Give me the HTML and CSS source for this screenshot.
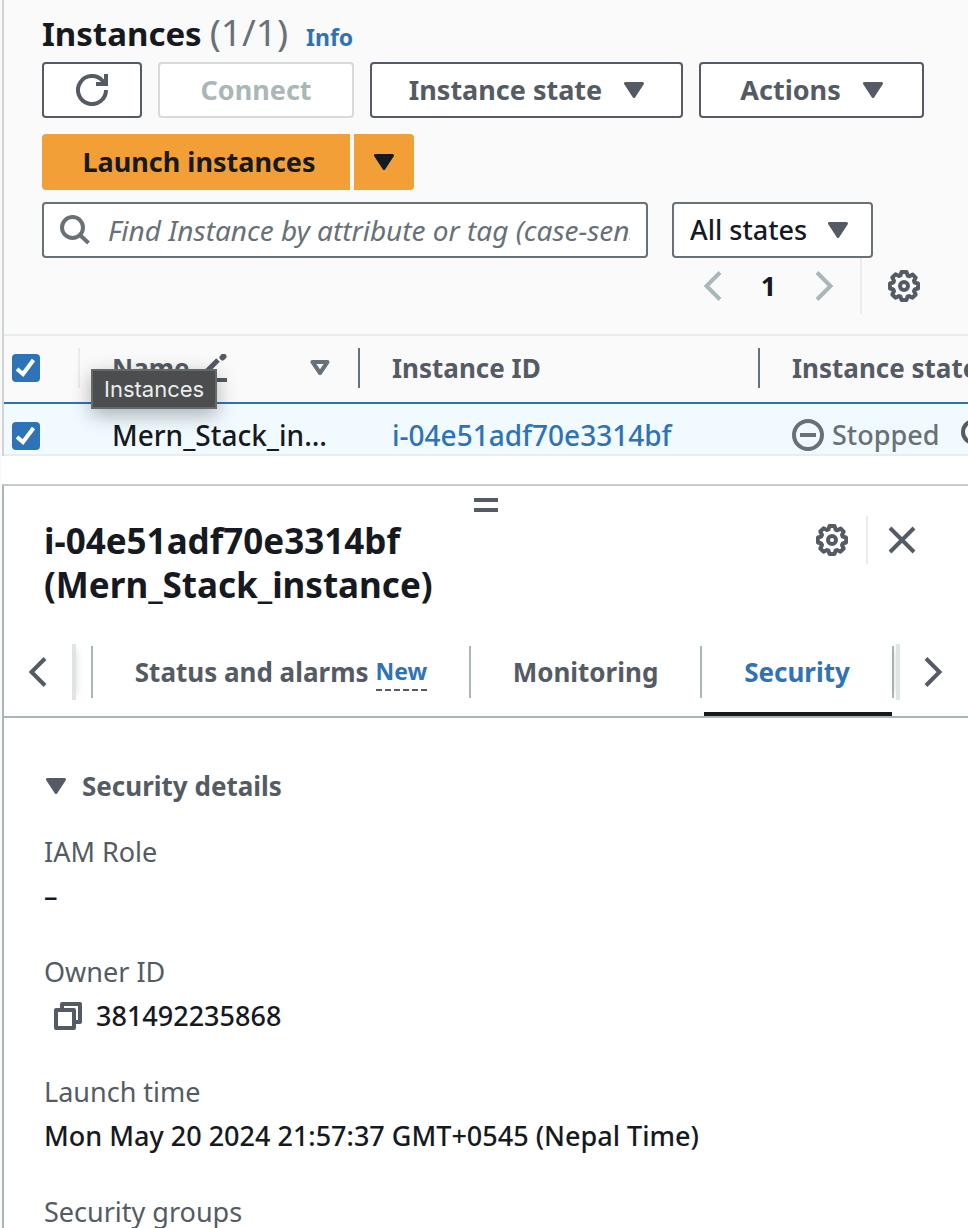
FILE: index.html
```html
<!DOCTYPE html>
<html lang="en">
<head>
<meta charset="utf-8">
<title>Instances</title>
<meta name="viewport" content="width=device-width, initial-scale=1">
<link rel="stylesheet" href="styles.css">
</head>
<body>
<svg class="sprite" aria-hidden="true">
  <symbol id="caret" viewBox="0 0 20 16"><path d="M1.500 1.500h17L10 14.500z" fill="currentColor" stroke="currentColor" stroke-width="3" stroke-linejoin="round"/></symbol>
  <symbol id="gear" viewBox="0 0 32 32">
    <path fill="none" stroke="currentColor" stroke-width="4" stroke-linejoin="round" d="M13.500 2h5l1.200 3.600 1.600.7 3.400-1.700 3 3-1.700 3.400.7 1.600L30 13.500v5l-3.300 1-.7 1.600 1.700 3.400-3.200 3.200-3.400-1.700-1.600.7L18.500 30h-5l-1-3.300-1.600-.7-3.400 1.700-3.200-3.200L6 21.100l-.7-1.600L2 18.500v-5l3.300-1 .7-1.600-1.700-3.400 3.200-3.200L10.900 6l1.600-.7z"/>
    <circle cx="16" cy="16" r="4" fill="none" stroke="currentColor" stroke-width="4"/>
  </symbol>
  <symbol id="left" viewBox="0 0 20 32"><path d="M17 2.500 3.500 16 17 29.500" fill="none" stroke="currentColor" stroke-width="4"/></symbol>
  <symbol id="right" viewBox="0 0 20 32"><path d="M3 2.500 16.500 16 3 29.500" fill="none" stroke="currentColor" stroke-width="4"/></symbol>
  <symbol id="tick" viewBox="0 0 28 28"><path d="M5 15l6 5L21.500 6" fill="none" stroke="#fff" stroke-width="4"/></symbol>
</svg>

<div class="app">
  <section class="list">
    <header class="toolbar">
      <div class="title"><h1>Instances</h1><span class="count">(1/1)</span><a class="info" href="#info">Info</a></div>
      <div class="actions">
        <button class="btn btn-refresh" type="button" aria-label="Refresh">
          <svg width="32" height="32" viewBox="0 0 32 32"><g fill="none" stroke="currentColor" stroke-width="4"><path d="M30 16a14 14 0 1 1-3.500-9.200l2 2.700"/><path d="M30 0v10H20"/></g></svg>
        </button>
        <button class="btn btn-connect" type="button" disabled>Connect</button>
        <button class="btn btn-state" type="button">Instance state <svg class="caret"><use href="#caret"/></svg></button>
        <button class="btn btn-actions" type="button">Actions <svg class="caret"><use href="#caret"/></svg></button>
        <div class="split">
          <button class="primary primary-main" type="button">Launch instances</button>
          <button class="primary primary-more" type="button" aria-label="More launch options"><svg class="caret"><use href="#caret"/></svg></button>
        </div>
      </div>
      <div class="filters">
        <label class="search">
          <svg width="30" height="30" viewBox="0 0 30 30"><g fill="none" stroke="currentColor" stroke-width="4"><circle cx="12.500" cy="12.500" r="10.500"/><path d="M20 20l8.500 8"/></g></svg>
          <input type="text" aria-label="Find Instance" placeholder="Find Instance by attribute or tag (case-sensitive)">
        </label>
        <div class="select">
          <select aria-label="State"><option>All states</option></select>
          <svg class="caret"><use href="#caret"/></svg>
        </div>
      </div>
      <div class="pager">
        <button class="icon-btn muted" type="button" aria-label="Previous page" disabled><svg class="chev"><use href="#left"/></svg></button>
        <span class="page">1</span>
        <button class="icon-btn muted" type="button" aria-label="Next page" disabled><svg class="chev"><use href="#right"/></svg></button>
        <span class="pager-rule"></span>
        <button class="icon-btn" type="button" aria-label="Preferences"><svg class="gear"><use href="#gear"/></svg></button>
      </div>
    </header>

    <div class="table-wrap">
      <table class="table">
        <colgroup><col class="c-check"><col class="c-name"><col class="c-id"><col class="c-state"></colgroup>
        <thead>
          <tr>
            <th><div class="head head-check"><label class="check"><input type="checkbox" aria-label="Select all" checked><svg><use href="#tick"/></svg></label></div></th>
            <th class="name-cell">
              <div class="head"><span>Name</span>
                <svg class="pencil" width="28" height="28" viewBox="0 0 28 28"><path d="M3 21 18 6" stroke="currentColor" stroke-width="5"/><path d="M22.500 3.500l1-1" stroke="currentColor" stroke-width="6" stroke-linecap="round"/><path d="M0 26h27" stroke="currentColor" stroke-width="4"/></svg>
                <svg class="sort" width="20" height="16" viewBox="0 0 20 16"><path d="M2.500 2h15L10 13z" fill="none" stroke="currentColor" stroke-width="4" stroke-linejoin="round"/></svg>
              </div>
              <span class="tooltip" role="tooltip">Instances</span>
            </th>
            <th><div class="head">Instance ID</div></th>
            <th><div class="head head-last">Instance state</div></th>
          </tr>
        </thead>
        <tbody>
          <tr>
            <td class="td-check"><label class="check"><input type="checkbox" aria-label="Select Mern_Stack_instance" checked><svg><use href="#tick"/></svg></label></td>
            <td>Mern_Stack_in…</td>
            <td><a href="#instance">i-04e51adf70e3314bf</a></td>
            <td><div class="status">
              <svg width="32" height="32" viewBox="0 0 32 32"><g fill="none" stroke="currentColor" stroke-width="4"><circle cx="16" cy="16" r="14"/><path d="M8 16h16"/></g></svg>
              <span>Stopped</span>
              <svg class="zoom" width="32" height="32" viewBox="0 0 32 32"><g fill="none" stroke="currentColor" stroke-width="4"><circle cx="13" cy="13" r="11"/><path d="M21 21l9 9"/></g></svg>
            </div></td>
          </tr>
        </tbody>
      </table>
    </div>
  </section>

  <section class="panel">
    <div class="grip"><span class="bars"></span></div>
    <header class="panel-head">
      <h2>i-04e51adf70e3314bf (Mern_Stack_instance)</h2>
      <div class="panel-tools">
        <button class="icon-btn" type="button" aria-label="Panel preferences"><svg class="gear"><use href="#gear"/></svg></button>
        <button class="icon-btn close" type="button" aria-label="Close"><svg width="28" height="28" viewBox="0 0 28 28"><path d="M2 2l24 24M26 2 2 26" fill="none" stroke="currentColor" stroke-width="4"/></svg></button>
      </div>
    </header>
    <nav class="tabbar">
      <button class="scroll scroll-left" type="button" aria-label="Scroll left"><svg class="chev"><use href="#left"/></svg></button>
      <div class="tabs" role="tablist">
        <button class="tab tab-status" type="button" role="tab"><span>Status and alarms <span class="new">New</span></span></button>
        <button class="tab tab-monitoring" type="button" role="tab"><span>Monitoring</span></button>
        <button class="tab tab-security" type="button" role="tab" aria-selected="true"><span>Security</span></button>
      </div>
      <button class="scroll scroll-right" type="button" aria-label="Scroll right"><svg class="chev"><use href="#right"/></svg></button>
    </nav>
    <div class="details">
      <h3><svg class="caret"><use href="#caret"/></svg>Security details</h3>
      <dl>
        <div><dt>IAM Role</dt><dd>–</dd></div>
        <div><dt>Owner ID</dt><dd class="owner">
          <button class="copy" type="button" aria-label="Copy owner ID"><svg width="28" height="28" viewBox="0 0 28 28"><g fill="none" stroke="currentColor" stroke-width="4" stroke-linejoin="round"><path d="M2 8h18v18H2z"/><path d="M8 8V2h18v18h-6"/></g></svg></button>381492235868</dd></div>
        <div><dt>Launch time</dt><dd>Mon May 20 2024 21:57:37 GMT+0545 (Nepal Time)</dd></div>
        <div><dt>Security groups</dt></div>
      </dl>
    </div>
  </section>
</div>
</body>
</html>
```
FILE: styles.css
```css
:root {
  --ink: #16191f;
  --grey: #545b64;
  --soft: #687078;
  --muted: #aab7b8;
  --rule: #eaeded;
  --blue: #2e73b8;
  --orange: #f29f38;
}

* { box-sizing: border-box; }

body {
  margin: 0;
  padding-left: 2px;
  background: #fafafa;
  color: var(--ink);
  font: 27px/44px "Noto Sans", "Open Sans", sans-serif;
}

button, input, select { font: inherit; color: inherit; }
button { padding: 0; border: 0; background: none; }
a { color: var(--blue); text-decoration: none; }
svg { display: block; flex: none; }
h1, h2, h3, dl, dd { margin: 0; }

.sprite { position: absolute; width: 0; height: 0; }
.caret { width: 20px; height: 16px; }
.gear { width: 32px; height: 32px; }
.chev { width: 20px; height: 32px; }

.app {
  display: flex;
  flex-direction: column;
  height: 100vh;
  overflow: hidden;
  background: #fff;
}

.list {
  border-left: 2px solid #cfd5d6;
  background: #fff;
}

.toolbar {
  padding: 6px 44px 20px 38px;
  border-bottom: 2px solid var(--rule);
  background: #fafafa;
}

.title { display: flex; align-items: baseline; height: 56px; }
.title h1 { font-size: 33px; line-height: 56px; }
.count { margin-left: 8px; color: var(--soft); font-size: 37px; }
.info { margin-left: 18px; font-size: 23px; font-weight: 700; }

.actions { display: flex; flex-wrap: wrap; gap: 16px; }

.btn {
  display: flex;
  align-items: center;
  justify-content: center;
  gap: 22px;
  height: 56px;
  border: 2px solid var(--grey);
  border-radius: 4px;
  background: #fff;
  color: var(--grey);
  font-weight: 700;
}

.btn:disabled { border-color: #d5dbdb; color: var(--muted); }
.btn-refresh { width: 100px; }
.btn-connect { width: 196px; }
.btn-state { width: 313px; }
.btn-actions { width: 225px; }

.split { display: flex; gap: 4px; }

.primary {
  display: flex;
  align-items: center;
  justify-content: center;
  height: 56px;
  background: var(--orange);
  font-weight: 700;
}

.primary-main { width: 308px; padding-left: 6px; border-radius: 4px 0 0 4px; }
.primary-more { width: 60px; border-radius: 0 4px 4px 0; }

.filters { display: flex; gap: 24px; padding: 12px 51px 0 0; font-weight: 500; }

.search {
  display: flex;
  flex: 1;
  align-items: center;
  gap: 18px;
  height: 56px;
  padding: 0 16px;
  border: 2px solid var(--soft);
  border-radius: 4px;
  background: #fff;
  color: var(--soft);
  font-size: 28px;
  font-weight: 400;
}

.search input {
  flex: 1;
  min-width: 0;
  padding: 0;
  border: 0;
  outline: 0;
  background: none;
}

.search input::placeholder { color: var(--soft); font-style: italic; opacity: 1; }

.select { display: grid; width: 201px; align-items: center; }
.select > * { grid-area: 1 / 1; }

.select select {
  width: 100%;
  height: 56px;
  padding: 0 16px;
  border: 2px solid var(--soft);
  border-radius: 4px;
  background: #fff;
  appearance: none;
}

.select .caret { justify-self: end; margin-right: 25px; color: var(--grey); pointer-events: none; }

.pager { display: flex; align-items: center; justify-content: flex-end; height: 56px; }
.pager .page { width: 91px; font-weight: 700; text-align: center; }
.pager-rule { width: 2px; height: 56px; margin: 0 22px 0 26px; background: var(--rule); }
.icon-btn { display: flex; align-items: center; padding: 0 4px; color: var(--grey); }
.muted { padding: 0; color: var(--muted); }

.table-wrap { overflow: hidden; }
.table { width: 1156px; table-layout: fixed; border-collapse: separate; border-spacing: 0; }
.c-check { width: 76px; }
.c-name { width: 280px; }
.c-id { width: 400px; }
.c-state { width: 400px; }

.table th {
  height: 68px;
  padding: 0 0 2px;
  border-bottom: 2px solid var(--blue);
  background: #fafafa;
  color: var(--grey);
  font-size: 26px;
  text-align: left;
}

.head {
  display: flex;
  align-items: center;
  height: 40px;
  padding: 0 28px 0 32px;
  border-right: 2px solid var(--soft);
}

.head-check { padding: 0 0 0 8px; border-color: var(--rule); }
.head-last { border: 0; }
.pencil { margin-left: 10px; }
.sort { margin-left: auto; color: var(--soft); }
.name-cell { position: relative; }

.tooltip {
  position: absolute;
  top: 33px;
  left: 11px;
  padding: 0 11px;
  border: 2px solid #66696a;
  background: #4b4d4f;
  box-shadow: 0 6px 20px rgba(0, 0, 0, .3);
  color: #ececec;
  font: 22px/36px Inter, sans-serif;
}

.table td {
  height: 52px;
  padding: 12px 0 0 32px;
  border-bottom: 2px solid var(--rule);
  background: #f1faff;
  font-size: 28px;
  font-weight: 500;
  line-height: 38px;
  vertical-align: top;
  white-space: nowrap;
}

.table .td-check { padding: 18px 0 0 8px; }

.check { display: grid; width: 28px; height: 28px; }
.check > * { grid-area: 1 / 1; width: 28px; height: 28px; margin: 0; }
.check input { appearance: none; border-radius: 4px; background: var(--blue); }
.check svg { pointer-events: none; }

.status { display: flex; align-items: center; gap: 8px; color: var(--soft); font-size: 27px; }
.status .zoom { margin-left: 14px; color: var(--grey); }

.panel {
  flex: 1;
  margin-top: 28px;
  border-top: 2px solid #c5cccd;
  border-left: 2px solid var(--muted);
  background: #fff;
}

.grip { display: flex; justify-content: center; height: 30px; padding-top: 12px; }
.bars { width: 24px; height: 14px; border: solid var(--grey); border-width: 4px 0; }

.panel-head { display: flex; justify-content: space-between; padding: 0 48px 0 40px; }
.panel-head h2 { width: 420px; padding-top: 3px; font-size: 35px; line-height: 44px; }
.panel-tools { display: flex; align-items: center; height: 48px; }
.panel-tools .close { height: 48px; margin-left: 14px; padding-left: 20px; border-left: 2px solid var(--rule); }

.tabbar {
  display: flex;
  align-items: center;
  height: 90px;
  margin-top: 21px;
  border-bottom: 2px solid var(--muted);
}

.scroll { display: flex; align-items: center; height: 56px; color: var(--grey); }
.scroll-left { width: 72px; padding-left: 24px; border-right: 4px solid #dfe4e4; box-shadow: 6px 0 8px -6px rgba(0, 0, 0, .15); }
.scroll-right { width: 72px; padding-left: 23px; border-left: 4px solid #dfe4e4; box-shadow: -6px 0 8px -6px rgba(0, 0, 0, .15); }

.tabs { display: flex; flex: 1; align-self: stretch; padding: 0 2px 0 15px; }

.tab {
  display: flex;
  align-items: center;
  justify-content: center;
  color: var(--grey);
  font-size: 26px;
  font-weight: 700;
  white-space: nowrap;
}

.tab > span {
  display: flex;
  flex: 1;
  align-items: center;
  justify-content: center;
  height: 52px;
  border-left: 2px solid var(--muted);
}

.tab-status { flex: 378; }
.tab-monitoring { flex: 231; }
.tab-security {
  flex: 194;
  background: linear-gradient(var(--ink), var(--ink)) right 2px bottom / calc(100% - 6px) 4px no-repeat;
  color: var(--blue);
}
.tab-security > span { border-right: 2px solid var(--muted); }

.new {
  margin-left: 7px;
  border-bottom: 2px dashed var(--grey);
  color: var(--blue);
  font-size: 23px;
  line-height: 36px;
}

.details { padding: 46px 40px 0; }

.details h3 {
  display: flex;
  align-items: center;
  gap: 16px;
  padding-left: 2px;
  margin-bottom: 22px;
  color: var(--grey);
  font-size: 26px;
}

.details dl { display: flex; flex-direction: column; gap: 32px; }
.details dt { color: var(--grey); }
.details dd { font-weight: 500; }
.owner { display: flex; align-items: center; gap: 14px; }
.copy { margin-left: 10px; color: var(--grey); }
```
